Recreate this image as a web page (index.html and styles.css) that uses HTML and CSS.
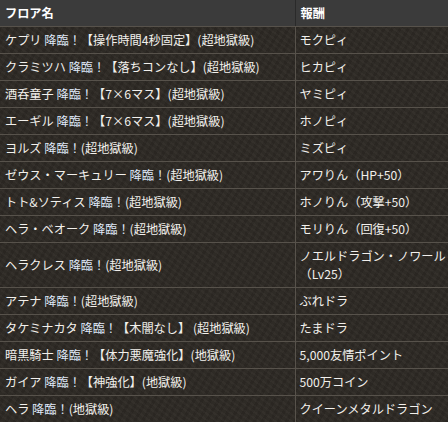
FILE: index.html
```html
<!DOCTYPE html>
<html lang="ja">
<head>
<meta charset="utf-8">
<link rel="stylesheet" href="styles.css">
</head>
<body>
<table class="floor-table">
  <thead>
    <tr><th class="col-floor">フロア名</th><th class="col-reward">報酬</th></tr>
  </thead>
  <tbody>
    <tr><td>ケプリ <span class="hl">降臨！</span>【操作時間4秒固定】(超地獄級)</td><td>モクピィ</td></tr>
    <tr><td>クラミツハ <span class="hl">降臨！</span>【落ちコンなし】(超地獄級)</td><td>ヒカピィ</td></tr>
    <tr><td>酒呑童子 <span class="hl">降臨！</span>【7×6マス】(超地獄級)</td><td>ヤミピィ</td></tr>
    <tr><td>エーギル <span class="hl">降臨！</span>【7×6マス】(超地獄級)</td><td>ホノピィ</td></tr>
    <tr><td>ヨルズ <span class="hl">降臨！</span>(超地獄級)</td><td>ミズピィ</td></tr>
    <tr><td>ゼウス・マーキュリー <span class="hl">降臨！</span>(超地獄級)</td><td>アワりん（HP+50）</td></tr>
    <tr><td>トト&amp;ソティス <span class="hl">降臨！</span>(超地獄級)</td><td>ホノりん（攻撃+50）</td></tr>
    <tr><td>ヘラ・ベオーク <span class="hl">降臨！</span>(超地獄級)</td><td>モリりん（回復+50）</td></tr>
    <tr><td>ヘラクレス <span class="hl">降臨！</span>(超地獄級)</td><td>ノエルドラゴン・ノワール<br>（Lv25）</td></tr>
    <tr><td>アテナ <span class="hl">降臨！</span>(超地獄級)</td><td>ぶれドラ</td></tr>
    <tr><td>タケミナカタ <span class="hl">降臨！</span>【木闇なし】 (超地獄級)</td><td>たまドラ</td></tr>
    <tr><td>暗黒騎士 <span class="hl">降臨！</span>【体力悪魔強化】(地獄級)</td><td>5,000友情ポイント</td></tr>
    <tr><td>ガイア <span class="hl">降臨！</span>【神強化】(地獄級)</td><td>500万コイン</td></tr>
    <tr><td>ヘラ <span class="hl">降臨！</span>(地獄級)</td><td>クイーンメタルドラゴン</td></tr>
  </tbody>
</table>
</body>
</html>
```
FILE: styles.css
```css
html, body {
  margin: 0;
  padding: 0;
  background: #2c2823;
}
body {
  width: 448px;
  height: 422px;
  overflow: hidden;
  font-family: "Noto Sans CJK JP", "Noto Sans", sans-serif;
  font-size: 12.2px;
  color: #f2f0ec;
  background-color: #2d2924;
  background-image:
    repeating-linear-gradient(37deg, rgba(255,255,255,0.018) 0 2px, rgba(0,0,0,0.03) 2px 5px),
    repeating-linear-gradient(-61deg, rgba(0,0,0,0.04) 0 3px, rgba(255,255,255,0.015) 3px 7px);
}
.floor-table {
  width: 448px;
  border-collapse: collapse;
  table-layout: fixed;
}
th, td { box-sizing: border-box; }
.col-floor { width: 295px; }
.col-reward { width: 153px; }
th {
  background: #3b3b3b;
  color: #ffffff;
  font-weight: bold;
  text-align: left;
  height: 26px;
  padding: 0 0 0 5px;
  line-height: 18px;
  border-bottom: 1px solid #57524b;
}
th + th { border-left: 1px solid #2a2a2a; }
td {
  padding: 4px 0 4px 5px;
  line-height: 18px;
  height: 27px;
  border-bottom: 1px solid #57524b;
  white-space: nowrap;
  vertical-align: middle;
}
td + td {
  border-left: 1px solid #57524b;
  padding-left: 4px;
}
.hl { color: #dfe7f7; }
```
